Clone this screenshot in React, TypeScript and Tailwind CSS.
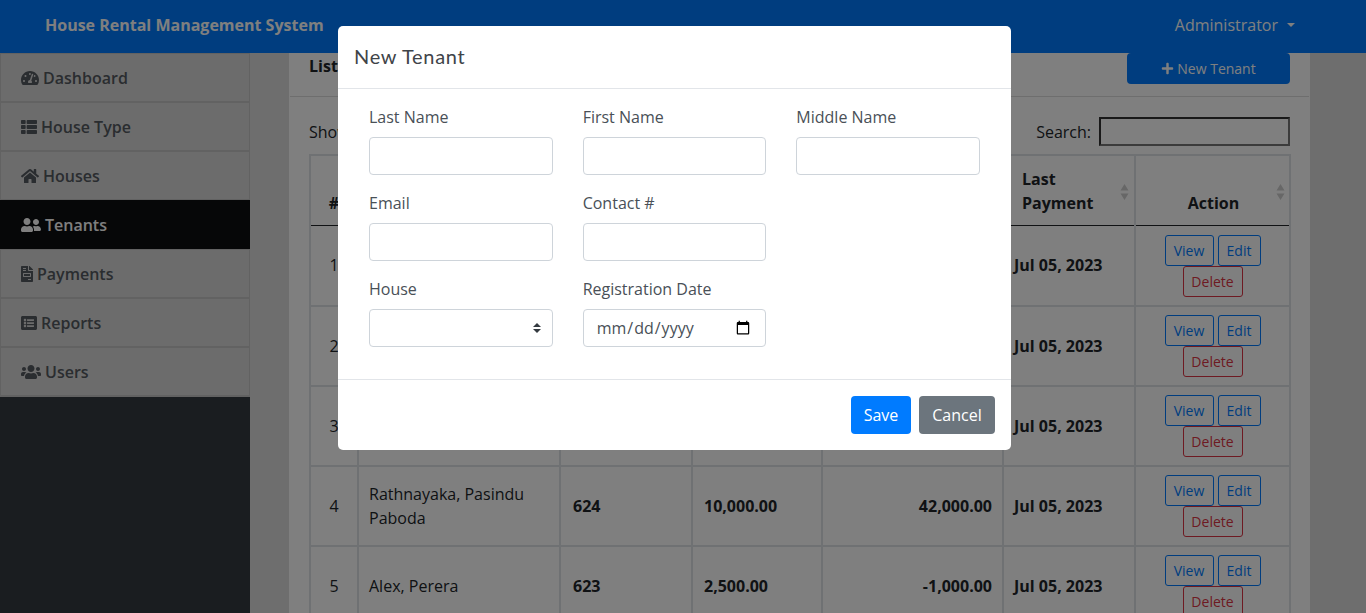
import React from "react";
import { FaTachometerAlt, FaThList, FaHome, FaUserFriends, FaFileInvoice, FaListAlt, FaUsers, FaPlus } from "react-icons/fa";

const nav = [
  { label: "Dashboard", icon: FaTachometerAlt, w: "h-[16px] w-[18px] shrink-0" },
  { label: "House Type", icon: FaThList, w: "h-[16px] w-[16px] shrink-0" },
  { label: "Houses", icon: FaHome, w: "h-[16px] w-[18px] shrink-0" },
  { label: "Tenants", icon: FaUserFriends, w: "h-[16px] w-[20px] shrink-0", active: true },
  { label: "Payments", icon: FaFileInvoice, w: "h-[16px] w-[12px] shrink-0" },
  { label: "Reports", icon: FaListAlt, w: "h-[16px] w-[16px] shrink-0" },
  { label: "Users", icon: FaUsers, w: "h-[16px] w-[20px] shrink-0" },
];

const rows = [
  { n: 1, name: "", house: "", rent: "", out: "" },
  { n: 2, name: "", house: "", rent: "", out: "" },
  { n: 3, name: "", house: "", rent: "", out: "" },
  { n: 4, name: "Rathnayaka, Pasindu Paboda", house: "624", rent: "10,000.00", out: "42,000.00" },
  { n: 5, name: "Alex, Perera", house: "623", rent: "2,500.00", out: "-1,000.00" },
];

function SortArrows({ last }: { last: boolean }) {
  return (
    <svg className={last ? "absolute right-[4px] top-[28px]" : "absolute right-[5px] top-[28px]"} width="9" height="16" viewBox="0 0 9 16">
      <path d="M4.5 0 L8.5 6.5 H0.5 Z M4.5 16 L8.5 9.5 H0.5 Z" fill="#cfcfcf" />
    </svg>
  );
}

function Field({ label, children }: { label: string; children?: React.ReactNode }) {
  return (
    <div className="flex flex-col h-[86px]">
      <label className="text-[16px] leading-[24px] h-[32px] text-[#495057]">{label}</label>
      {children ?? <input className="h-[38px] w-full rounded-[4px] border border-[#ced4da] bg-white px-3" />}
    </div>
  );
}

export default function App() {
  return (
    <div className="relative h-[613px] overflow-hidden flex flex-col font-['Open_Sans','Liberation_Sans',sans-serif] text-[16px] text-[#212529] bg-[#dcdcdc]">
      <header className="h-[53px] shrink-0 z-10 bg-[#007bff] flex items-center justify-between pl-[45px] pr-[71px] pb-[4px] text-white">
        <span className="font-bold text-[16px]">House Rental Management System</span>
        <span className="flex items-center text-[16px]">
          Administrator
          <span className="ml-[9px] mt-[1px] border-x-[4px] border-t-[4px] border-x-transparent border-t-white" />
        </span>
      </header>

      <div className="flex flex-1 min-h-0">
        <aside className="w-[250px] shrink-0 bg-[#343a40]">
          <div className="border-b border-[#c4c4c4]">
            {nav.map((item) => {
              const Icon = item.icon;
              return (
                <div
                  key={item.label}
                  className={
                    item.active
                      ? "h-[49px] flex items-center gap-[4px] pl-[21px] bg-[#0d0e11] text-white font-semibold"
                      : "h-[49px] flex items-center gap-[4px] pl-[20px] bg-[#d8d8d8] text-[#555a60] font-semibold border border-[#c4c4c4]"
                  }
                >
                  <Icon className={item.w} />
                  <span>{item.label}</span>
                </div>
              );
            })}
          </div>
        </aside>

        <main className="flex-1 min-w-0 overflow-hidden pl-[39px]">
          <div className="-mt-[20px] bg-white w-[1021px] border-x border-white">
            <div className="h-[64px] border-b border-[#dcdcdc] flex items-end justify-between pl-[19px] pr-[19px] pb-[12px]">
              <span className="font-bold mb-[6px]">List</span>
              <button className="h-[31px] w-[163px] rounded-[4px] bg-[#007bff] text-white text-[14px] flex items-center justify-center gap-[3px]">
                <FaPlus className="text-[13px]" /> New Tenant
              </button>
            </div>
            <div className="px-[19px] pt-[20px]">
              <div className="flex items-center justify-between h-[29px] mb-[8px]">
                <span>Show</span>
                <label className="flex items-center gap-[8px]">
                  Search:
                  <input className="w-[191px] h-[29px] border-2 border-[#333] border-b-[#767676] border-r-[#767676] bg-white" />
                </label>
              </div>
              <table className="w-[981px] table-fixed border-collapse text-[16px]">
                <colgroup>
                  <col className="w-[48px]" />
                  <col className="w-[202px]" />
                  <col className="w-[132px]" />
                  <col className="w-[130px]" />
                  <col className="w-[181px]" />
                  <col className="w-[132px]" />
                  <col className="w-[155px]" />
                </colgroup>
                <thead>
                  <tr className="h-[70px]">
                    {["#", "", "", "", "", "Last Payment", "Action"].map((h, i) => (
                      <th
                        key={i}
                        className={`relative border-x-2 border-t-2 border-b border-[#dee2e6] border-b-[#212529] pb-[10px] align-bottom font-bold leading-[24px] ${
                          i === 5 ? "text-left pl-[18px] pr-[24px]" : i === 6 ? "text-center pl-[14px] pr-[12px]" : "text-center px-[12px]"
                        }`}
                      >
                        {h}
                        {i > 4 && <SortArrows last={i === 6} />}
                      </th>
                    ))}
                  </tr>
                </thead>
                <tbody>
                  {rows.map((r, idx) => {
                    const first = idx === 0;
                    const cell = first ? "border-x-2 border-b-2 border-t-0 border-[#dee2e6]" : "border-2 border-[#dee2e6]";
                    return (
                      <tr key={r.n} className={first ? "h-[81px]" : "h-[80px]"}>
                        <td className={`${cell} text-center`}>{r.n}</td>
                        <td className={`${cell} px-[10px] leading-[24px]`}>{r.name}</td>
                        <td className={`${cell} px-[12px] font-bold`}>{r.house}</td>
                        <td className={`${cell} px-[11px] font-bold`}>{r.rent}</td>
                        <td className={`${cell} pr-[10px] font-bold text-right`}>{r.out}</td>
                        <td className={`${cell} pl-[10px] font-bold whitespace-nowrap`}>Jul 05, 2023</td>
                        <td className={`${cell} text-center align-top ${first ? "pt-[9px]" : "pt-[8px]"}`}>
                          <div className="flex flex-wrap justify-center gap-x-[4px] px-[8px]">
                            <button className="h-[31px] w-[49px] rounded-[3px] border border-[#007bff] text-[#007bff] text-[14px]">View</button>
                            <button className="h-[31px] w-[43px] rounded-[3px] border border-[#007bff] text-[#007bff] text-[14px]">Edit</button>
                            <button className="h-[31px] w-[60px] rounded-[3px] border border-[#dc3545] text-[#dc3545] text-[14px]">Delete</button>
                          </div>
                        </td>
                      </tr>
                    );
                  })}
                </tbody>
              </table>
            </div>
          </div>
        </main>
      </div>

      <div className="fixed inset-0 z-20 bg-black/50 flex justify-center items-start pt-[26px] pr-[17px]">
        <div className="w-[673px] h-[424px] rounded-[5px] bg-white flex flex-col">
          <div className="h-[63px] shrink-0 border-b border-[#e2e5e9] flex items-center pl-[16px] pb-[3px]">
            <h5 className="font-['Lato','Open_Sans',sans-serif] text-[20px] tracking-[0.7px] text-[#3f4449]">New Tenant</h5>
          </div>
          <div className="flex-1 pt-[16px] px-[31px]">
            <div className="grid grid-cols-3 gap-x-[30px]">
              <Field label="Last Name" />
              <Field label="First Name" />
              <Field label="Middle Name" />
              <Field label="Email" />
              <Field label="Contact #" />
              <div />
              <Field label="House">
                <div className="relative h-[38px]">
                  <select className="h-[38px] w-full appearance-none rounded-[4px] border border-[#ced4da] bg-white px-3" />
                  <svg className="absolute right-[12px] top-[14px]" width="8" height="10" viewBox="0 0 8 10">
                    <path d="M4 0 L8 4 H0 Z M4 10 L8 6 H0 Z" fill="#343a40" />
                  </svg>
                </div>
              </Field>
              <Field label="Registration Date">
                <input type="date" className="h-[38px] w-full rounded-[4px] border border-[#ced4da] bg-white px-3 text-[#495057]" />
              </Field>
            </div>
          </div>
          <div className="h-[71px] shrink-0 border-t border-[#e2e5e9] flex items-center justify-end gap-[8px] pr-[16px]">
            <button className="h-[38px] w-[60px] rounded-[4px] bg-[#007bff] text-white">Save</button>
            <button className="h-[38px] w-[76px] rounded-[4px] bg-[#6c757d] text-white">Cancel</button>
          </div>
        </div>
      </div>
    </div>
  );
}
